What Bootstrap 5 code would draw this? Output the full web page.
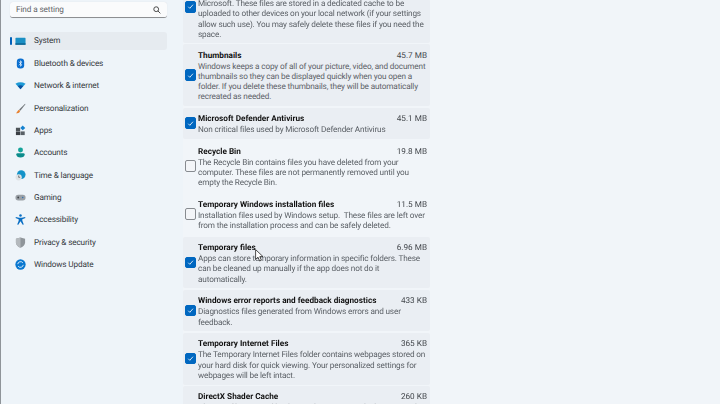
<!DOCTYPE html>
<html lang="en">
<head>
<meta charset="UTF-8">
<title>Settings - Disk Cleanup</title>
<link href="https://cdn.jsdelivr.net/npm/bootstrap@5.3.3/dist/css/bootstrap.min.css" rel="stylesheet">
<style>
body { background: #f1f5f9; font-family: Roboto, "Open Sans", sans-serif; height: 404px; overflow: hidden; color: #1b1b1b; text-rendering: geometricPrecision; }
.shell { height: 404px; border-left: 1px solid #8f9499; background: #f1f5f9; filter: blur(.3px); }
/* left pane */
.side-pane { width: 182px; background: #eef4f9; padding: 2px 16px 0 9px; }
.find-box { height: 16px; background: #fafbfc; border-radius: 3px; border-bottom: 1px solid #8d8f92; padding: 0 6px; font-size: 8.2px; letter-spacing: -.1px; color: #5f6368; box-shadow: 0 0 1px rgba(0,0,0,.12); }
.find-box span { padding-top: 1px; }
.side-list { margin-top: 14px; }
.side-item { height: 22.35px; font-size: 8.2px; letter-spacing: -.145px; color: #33373b; position: relative; padding-left: 5px; gap: 8px; border-radius: 3px; }
.side-item > span:last-child { padding-top: 1px; }
.side-item svg { width: 11px; height: 11px; flex: none; }
.side-item.picked { background: #e6ebf0; height: 18px; margin: 2px 0 2.35px; }
.pick-bar { position: absolute; left: 0; top: 5px; width: 1.5px; height: 8px; background: #005fb8; border-radius: 1px; }
/* right pane */
.clean-pane { width: 247px; }
.clean-row { background: #eaeef3; border-radius: 2px; margin-bottom: 1.5px; padding: 6.3px 3px 3.5px 15px; position: relative; font-size: 8.2px; letter-spacing: -.145px; line-height: 10.33px; color: #5b6066; white-space: nowrap; }
.clean-row.plain { background: transparent; }
.clean-row .form-check-input { position: absolute; left: 1.5px; top: 50%; width: 11.5px; height: 11.5px; margin: -6px 0 0; border-radius: 2px; border-color: #878b90; background-color: #f3f5f8; }
.clean-row .form-check-input:checked { background-color: #0067c0; border-color: #0067c0; background-image: url("data:image/svg+xml,%3csvg xmlns='http://www.w3.org/2000/svg' viewBox='0 0 20 20'%3e%3cpath fill='none' stroke='%23fff' stroke-width='1.8' d='m5 10.5 3.5 3.5 7-8'/%3e%3c/svg%3e"); }
.clean-head { color: #111; line-height: 11px; letter-spacing: 0; }
.clean-name { font-weight: 700; }
.clean-size { color: #44484d; }
.first-row { margin-top: -1px; padding-top: 0; padding-bottom: 2.4px; }
.clean-row.first-row .form-check-input { top: 8px; }
.mouse-arrow { position: absolute; left: 254px; top: 249px; width: 9px; height: 13px; }
</style>
</head>
<body>
<div class="shell d-flex position-relative">
  <div class="side-pane">
    <div class="find-box d-flex align-items-center justify-content-between">
      <span>Find a setting</span>
      <svg width="8" height="8" viewBox="0 0 10 10" fill="none" stroke="#444" stroke-width="1.2"><circle cx="4" cy="4" r="3"/><path d="M6.2 6.2 9.2 9.2"/></svg>
    </div>
    <div class="side-list">
      <div class="side-item picked d-flex align-items-center"><span class="pick-bar"></span>
        <svg viewBox="0 0 12 12"><rect x="0.5" y="2" width="11" height="7.5" rx=".6" fill="#1a8fc4"/><rect x="0.5" y="8" width="11" height="1.5" fill="#0d5f8c"/></svg><span>System</span></div>
      <div class="side-item d-flex align-items-center">
        <svg viewBox="0 0 12 12"><rect x="2" y="0.5" width="8" height="11" rx="3.6" fill="#0a6fd0"/><path d="M4.2 4 7.6 7.5 6 9V3l1.6 1.5L4.2 8" fill="none" stroke="#fff" stroke-width=".7"/></svg><span>Bluetooth &amp; devices</span></div>
      <div class="side-item d-flex align-items-center">
        <svg viewBox="0 0 12 12"><path d="M0.5 4Q6 0.8 11.5 4L6 10Z" fill="#1d9ad6"/><path d="M3 6.5Q6 4.8 9 6.5L6 10Z" fill="#0b4f9e"/></svg><span>Network &amp; internet</span></div>
      <div class="side-item d-flex align-items-center">
        <svg viewBox="0 0 12 12"><path d="M11 0.8 4.6 7.2 5.8 8.4 11.4 1.4Z" fill="#6f7479"/><path d="M4.4 7.4 5.6 8.6C5 10.6 3 11.2 1 11.2 2.4 10.2 2.6 8.2 4.4 7.4Z" fill="#e8812e"/></svg><span>Personalization</span></div>
      <div class="side-item d-flex align-items-center">
        <svg viewBox="0 0 12 12"><rect x="1" y="3" width="4.6" height="3.6" fill="#4d5358"/><rect x="1" y="7" width="4.6" height="4" fill="#3a3f44"/><rect x="6" y="7" width="4.6" height="4" fill="#596066"/><path d="M8.4 .6 11.2 3.2 8.4 5.8 5.8 3.2Z" fill="#1481cf"/></svg><span>Apps</span></div>
      <div class="side-item d-flex align-items-center">
        <svg viewBox="0 0 12 12"><circle cx="6" cy="3.2" r="2.7" fill="#15a39a"/><path d="M1.4 8.2Q1.4 6.8 3 6.8H9Q10.6 6.8 10.6 8.2 10.2 11.4 6 11.4 1.8 11.4 1.4 8.2Z" fill="#0c8c8c"/></svg><span>Accounts</span></div>
      <div class="side-item d-flex align-items-center">
        <svg viewBox="0 0 12 12"><circle cx="6.8" cy="5" r="4.7" fill="#1493c9"/><circle cx="4" cy="8" r="3.4" fill="#dfe3e6"/><path d="M4 6V8H5.6" fill="none" stroke="#444" stroke-width=".7"/></svg><span>Time &amp; language</span></div>
      <div class="side-item d-flex align-items-center">
        <svg viewBox="0 0 12 12"><rect x="0.5" y="3" width="11" height="6.4" rx="3" fill="#9aa0a6"/><circle cx="3.5" cy="6" r="1" fill="#3f4449"/><circle cx="8.4" cy="6" r=".8" fill="#2d6fb0"/></svg><span>Gaming</span></div>
      <div class="side-item d-flex align-items-center">
        <svg viewBox="0 0 12 12"><circle cx="6" cy="1.7" r="1.4" fill="#0a6fc4"/><path d="M1 3.2 4.4 4.2H7.6L11 3.2 11.4 4.4 8 5.8V7.4L9.6 11.4 8.4 11.8 6 8 3.6 11.8 2.4 11.4 4 7.4V5.8L.6 4.4Z" fill="#0a6fc4"/></svg><span>Accessibility</span></div>
      <div class="side-item d-flex align-items-center">
        <svg viewBox="0 0 12 12"><path d="M6 .5 11 2V6C11 9 8.6 10.8 6 11.6 3.4 10.8 1 9 1 6V2Z" fill="#8f959a"/><path d="M6 .5V11.6C3.4 10.8 1 9 1 6V2Z" fill="#b4b9bd"/></svg><span>Privacy &amp; security</span></div>
      <div class="side-item d-flex align-items-center">
        <svg viewBox="0 0 12 12"><circle cx="6" cy="6" r="5.6" fill="#0a78d0"/><path d="M3 5.6A3.1 3.1 0 0 1 8.6 4.2M9 6.4A3.1 3.1 0 0 1 3.4 7.8" fill="none" stroke="#fff" stroke-width=".9"/></svg><span>Windows Update</span></div>
    </div>
  </div>
  <div class="clean-pane">
    <div class="clean-row first-row"><input class="form-check-input" type="checkbox" checked>Microsoft. These files are stored in a dedicated cache to be<br>uploaded to other devices on your local network (if your settings<br>allow such use). You may safely delete these files if you need the<br>space.</div>
    <div class="clean-row"><input class="form-check-input" type="checkbox" checked>
      <div class="clean-head d-flex justify-content-between"><span class="clean-name">Thumbnails</span><span class="clean-size">45.7 MB</span></div>
      Windows keeps a copy of all of your picture, video, and document<br>thumbnails so they can be displayed quickly when you open a<br>folder. If you delete these thumbnails, they will be automatically<br>recreated as needed.</div>
    <div class="clean-row"><input class="form-check-input" type="checkbox" checked>
      <div class="clean-head d-flex justify-content-between"><span class="clean-name">Microsoft Defender Antivirus</span><span class="clean-size">45.1 MB</span></div>
      Non critical files used by Microsoft Defender Antivirus</div>
    <div class="clean-row plain"><input class="form-check-input" type="checkbox">
      <div class="clean-head d-flex justify-content-between"><span class="clean-name">Recycle Bin</span><span class="clean-size">19.8 MB</span></div>
      The Recycle Bin contains files you have deleted from your<br>computer. These files are not permanently removed until you<br>empty the Recycle Bin.</div>
    <div class="clean-row plain"><input class="form-check-input" type="checkbox">
      <div class="clean-head d-flex justify-content-between"><span class="clean-name">Temporary Windows installation files</span><span class="clean-size">11.5 MB</span></div>
      Installation files used by Windows setup.&nbsp; These files are left over<br>from the installation process and can be safely deleted.</div>
    <div class="clean-row"><input class="form-check-input" type="checkbox" checked>
      <div class="clean-head d-flex justify-content-between"><span class="clean-name">Temporary files</span><span class="clean-size">6.96 MB</span></div>
      Apps can store temporary information in specific folders. These<br>can be cleaned up manually if the app does not do it<br>automatically.</div>
    <div class="clean-row"><input class="form-check-input" type="checkbox" checked>
      <div class="clean-head d-flex justify-content-between"><span class="clean-name">Windows error reports and feedback diagnostics</span><span class="clean-size">433 KB</span></div>
      Diagnostics files generated from Windows errors and user<br>feedback.</div>
    <div class="clean-row"><input class="form-check-input" type="checkbox" checked>
      <div class="clean-head d-flex justify-content-between"><span class="clean-name">Temporary Internet Files</span><span class="clean-size">365 KB</span></div>
      The Temporary Internet Files folder contains webpages stored on<br>your hard disk for quick viewing. Your personalized settings for<br>webpages will be left intact.</div>
    <div class="clean-row">
      <div class="clean-head d-flex justify-content-between"><span class="clean-name">DirectX Shader Cache</span><span class="clean-size">260 KB</span></div>
      Clean up files created by the graphics system which can speed up</div>
  </div>
  <svg class="mouse-arrow" viewBox="0 0 9 13"><path d="M.6.6V10.4L3 8.2 4.6 12 6.4 11.2 4.8 7.6H8Z" fill="#fff" stroke="#222" stroke-width=".8"/></svg>
</div>
<script src="https://cdn.jsdelivr.net/npm/bootstrap@5.3.3/dist/js/bootstrap.bundle.min.js"></script>
</body>
</html>
